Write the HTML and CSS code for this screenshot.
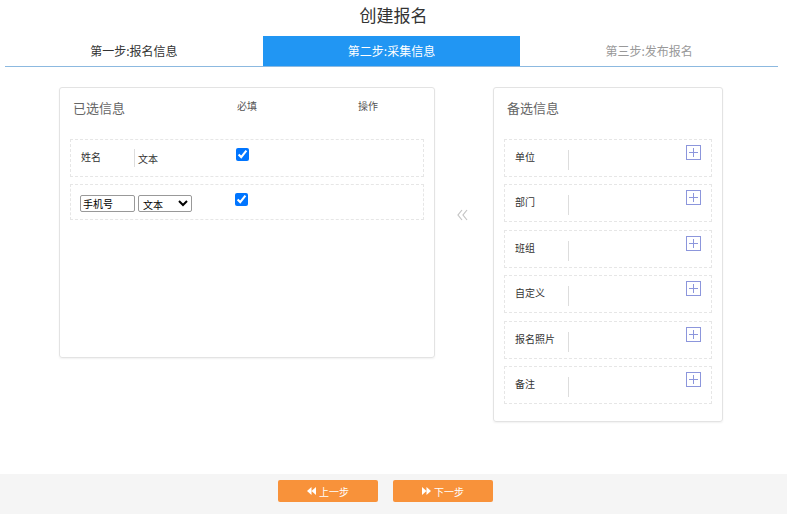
FILE: index.html
```html
<!DOCTYPE html>
<html lang="zh">
<head>
    <meta charset="UTF-8">
    <title>创建报名</title>
    <link rel="stylesheet" href="styles.css">
</head>
<body>
    <div class="page">
        <h1 class="title">创建报名</h1>
        <div class="steps">
            <div class="step done">第一步:报名信息</div>
            <div class="step active">第二步:采集信息</div>
            <div class="step">第三步:发布报名</div>
        </div>

        <div class="main">
            <div class="panel selected">
                <div class="panel-head">
                    <span class="panel-title">已选信息</span>
                    <span class="col-required">必填</span>
                    <span class="col-op">操作</span>
                </div>
                <div class="field-row">
                    <span class="field-name">姓名</span>
                    <span class="field-type">文本</span>
                    <span class="field-check"><input type="checkbox" checked></span>
                </div>
                <div class="field-row short">
                    <span class="field-edit">
                        <input class="name-input" type="text" value="手机号">
                        <select class="type-select">
                            <option>文本</option>
                            <option>数字</option>
                        </select>
                    </span>
                    <span class="field-check"><input type="checkbox" checked></span>
                </div>
            </div>

            <div class="move">
                <svg width="11" height="12" viewBox="0 0 11 12">
                    <path d="M5 1 L1 6 L5 11 M10 1 L6 6 L10 11" fill="none" stroke="#c4c4c4" stroke-width="1.2"/>
                </svg>
            </div>

            <div class="panel options">
                <div class="panel-head">
                    <span class="panel-title">备选信息</span>
                </div>
                <div class="option-row"><span class="option-name">单位</span><span class="option-body"></span><span class="add"></span></div>
                <div class="option-row"><span class="option-name">部门</span><span class="option-body"></span><span class="add"></span></div>
                <div class="option-row"><span class="option-name">班组</span><span class="option-body"></span><span class="add"></span></div>
                <div class="option-row"><span class="option-name">自定义</span><span class="option-body"></span><span class="add"></span></div>
                <div class="option-row"><span class="option-name">报名照片</span><span class="option-body"></span><span class="add"></span></div>
                <div class="option-row"><span class="option-name">备注</span><span class="option-body"></span><span class="add"></span></div>
            </div>
        </div>

        <div class="footer">
            <button class="btn">
                <svg width="9" height="8" viewBox="0 0 9 8"><path d="M4.5 0 L0 4 L4.5 8 Z M9 0 L4.5 4 L9 8 Z" fill="#fff"/></svg>
                上一步
            </button>
            <button class="btn">
                <svg width="9" height="8" viewBox="0 0 9 8"><path d="M0 0 L4.5 4 L0 8 Z M4.5 0 L9 4 L4.5 8 Z" fill="#fff"/></svg>
                下一步
            </button>
        </div>
    </div>

    <script>
        // 给备选信息每一行加上“+”图标
        document.querySelectorAll('.add').forEach(el => {
            el.innerHTML = '<svg width="15" height="15" viewBox="0 0 15 15">' +
                '<rect x="0.5" y="0.5" width="14" height="14" fill="none" stroke="#8c96dc"/>' +
                '<path d="M7.5 3 V12 M3 7.5 H12" stroke="#8c96dc"/></svg>';
        });
    </script>
</body>
</html>
```

FILE: styles.css
```css
body {
    margin: 0;
    font-family: "Noto Sans CJK SC", "Noto Sans", sans-serif;
    color: #333;
}
.page {
    min-height: 100vh;
    display: flex;
    flex-direction: column;
}
.title {
    margin: 0;
    height: 36px;
    line-height: 30px;
    text-align: center;
    font-size: 17px;
    font-weight: normal;
    color: #333;
}
.steps {
    display: flex;
    margin: 0 9px 0 5px;
    border-bottom: 1px solid #8cb9e0;
}
.step {
    flex: 1;
    height: 30px;
    line-height: 30px;
    text-align: center;
    font-size: 12px;
    color: #999;
}
.step.done {
    color: #333;
}
.step.active {
    background-color: #2196f3;
    color: #fff;
}
.main {
    display: flex;
    align-items: flex-start;
    padding: 20px 0 0 59px;
}
.panel {
    border: 1px solid #e3e3e3;
    border-radius: 3px;
    box-shadow: 0 1px 2px rgba(0, 0, 0, 0.06);
    padding: 0 10px;
    box-sizing: border-box;
}
.panel.selected {
    width: 376px;
    height: 271px;
}
.panel.options {
    width: 230px;
    padding-bottom: 17px;
}
.panel-head {
    display: flex;
    align-items: center;
    padding: 9px 0 22px 3px;
    height: 20px;
}
.panel-title {
    font-size: 13px;
    color: #666;
    width: 164px;
}
.col-required,
.col-op {
    font-size: 10px;
    color: #555;
    position: relative;
    top: -2px;
}
.col-required {
    width: 121px;
}
.field-row {
    display: flex;
    align-items: center;
    border: 1px dashed #e6e6e6;
    box-sizing: border-box;
    height: 38px;
    margin-bottom: 7px;
    font-size: 10px;
}
.field-row.short {
    height: 36px;
}
.field-name {
    width: 53px;
    padding-left: 10px;
    margin-top: -3px;
}
.field-type {
    border-left: 1px solid #ddd;
    height: 18px;
    line-height: 20px;
    padding-left: 3px;
    width: 98px;
}
.field-edit {
    display: flex;
    gap: 3px;
    padding: 2px 0 0 9px;
    width: 155px;
}
.name-input {
    width: 55px;
    height: 17px;
    box-sizing: border-box;
    border: 1px solid #999;
    border-radius: 2px;
    padding: 0 2px;
    font-size: 10px;
    font-family: inherit;
}
.type-select {
    width: 54px;
    height: 17px;
    box-sizing: border-box;
    border: 1px solid #999;
    border-radius: 2px;
    background-color: #fff;
    font-size: 10px;
    font-family: inherit;
    padding: 0;
}
.field-check {
    margin-top: -5px;
}
.short .field-check {
    margin-top: -3px;
}
.field-check input {
    margin: 0;
    width: 13px;
    height: 13px;
}
.move {
    width: 58px;
    box-sizing: border-box;
    text-align: center;
    padding: 115px 4px 0 0;
}
.option-row {
    display: flex;
    border: 1px dashed #e6e6e6;
    box-sizing: border-box;
    height: 38px;
    margin-bottom: 7.4px;
    font-size: 10px;
}
.option-row:last-child {
    margin-bottom: 0;
}
.option-name {
    width: 53px;
    padding-left: 10px;
    line-height: 36px;
    margin-top: -1px;
}
.option-body {
    flex: 1;
    border-left: 1px solid #ddd;
    margin: 10px 0 6px;
}
.add {
    padding: 5px 10px 0 0;
    line-height: 0;
}
.footer {
    margin-top: auto;
    height: 40px;
    background-color: #f5f5f5;
    display: flex;
    justify-content: center;
    align-items: flex-start;
    gap: 15px;
    padding: 6px 16px 0 0;
    box-sizing: border-box;
}
.btn {
    width: 100px;
    height: 22px;
    border: none;
    border-radius: 2px;
    background-color: #f8923a;
    color: #fff;
    font-size: 10px;
    font-family: inherit;
    display: flex;
    align-items: center;
    justify-content: center;
    gap: 3px;
    padding: 0;
}
```
